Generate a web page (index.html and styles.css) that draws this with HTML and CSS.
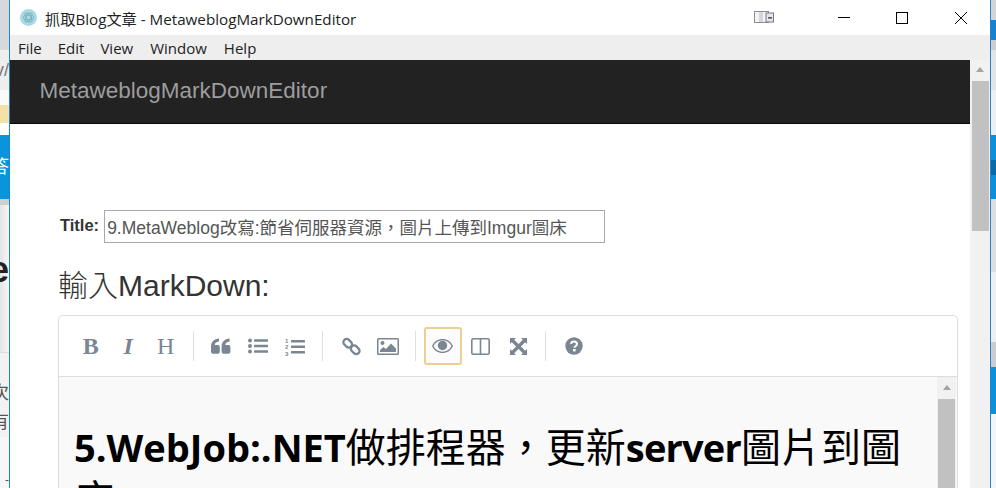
FILE: index.html
```html
<!DOCTYPE html>
<html lang="zh-Hant">
<head>
<meta charset="utf-8">
<title>抓取Blog文章 - MetaweblogMarkDownEditor</title>
<link rel="stylesheet" href="styles.css">
</head>
<body>
<div class="desktop">
  <div class="strip strip-left">
    <div class="seg l1"></div>
    <div class="seg l2">v/</div>
    <div class="seg l3"></div>
    <div class="seg l4"></div>
    <div class="seg l5"></div>
    <div class="seg l6">答</div>
    <div class="seg l7"></div>
    <div class="seg l8"><b>e</b></div>
    <div class="seg l9"><span>次</span><span>有</span></div>
    <div class="seg l10">-</div>
  </div>
  <div class="window">
    <header class="titlebar">
      <svg class="app-icon" viewBox="0 0 16 16" aria-hidden="true">
        <circle cx="8" cy="8" r="8" fill="#a5dbe6"/>
        <g fill="none" stroke="#7fa9b4" stroke-width=".8">
          <ellipse cx="8" cy="8" rx="5" ry="2.2"/>
          <ellipse cx="8" cy="8" rx="5" ry="2.2" transform="rotate(60 8 8)"/>
          <ellipse cx="8" cy="8" rx="5" ry="2.2" transform="rotate(120 8 8)"/>
        </g>
      </svg>
      <span class="win-title">抓取Blog文章 - MetaweblogMarkDownEditor</span>
      <svg class="tray-icon" viewBox="0 0 20 13" aria-hidden="true">
        <rect x=".5" y=".5" width="14" height="11" fill="#f4f4f6" stroke="#8d8d98"/>
        <rect x="5" y="1" width="4" height="10" fill="#d5d5dc"/>
        <rect x="12" y="2" width="7.5" height="9" fill="#e6e6ea" stroke="#777785"/>
        <rect x="14" y="6" width="4" height="1.6" fill="#555566"/>
      </svg>
      <div class="caption">
        <svg viewBox="0 0 12 12" class="cap-icon" aria-hidden="true"><path d="M0 5.5h12" stroke="#000" fill="none"/></svg>
      </div>
      <div class="caption">
        <svg viewBox="0 0 12 12" class="cap-icon" aria-hidden="true"><rect x=".5" y=".5" width="11" height="11" stroke="#000" fill="none"/></svg>
      </div>
      <div class="caption">
        <svg viewBox="0 0 12 12" class="cap-icon" aria-hidden="true"><path d="M0 0l12 12M12 0L0 12" stroke="#000" fill="none"/></svg>
      </div>
    </header>
    <nav class="menubar">
      <span class="m-file">File</span>
      <span class="m-edit">Edit</span>
      <span class="m-view">View</span>
      <span class="m-window">Window</span>
      <span>Help</span>
    </nav>
    <div class="viewport">
      <div class="page">
        <div class="navbar"><span class="brand">MetaweblogMarkDownEditor</span></div>
        <main class="content">
          <div class="title-row">
            <label class="title-label" for="title">Title:</label>
            <input class="title-input" id="title" type="text" value="9.MetaWeblog改寫:節省伺服器資源，圖片上傳到Imgur圖床">
          </div>
          <h3 class="section-heading"><span class="cjk">輸入</span>MarkDown:</h3>
          <section class="editor">
            <div class="toolbar">
              <span class="tool glyph bold">B</span>
              <span class="tool glyph italic">I</span>
              <span class="tool glyph">H</span>
              <i class="sep"></i>
              <span class="tool">
                <svg class="ic nudge1" width="20" height="16" viewBox="0 0 20 16" aria-hidden="true"><path d="M0 8.5C0 4 3 1 8 .5v3C5 4 3.8 5.3 3.7 7h3A2 2 0 0 1 8.8 9v4.7a2 2 0 0 1-2 2H2a2 2 0 0 1-2-2z"/><path d="M10.6 8.5c0-4.500 3-7.500 8-8v3c-3 .5-4.200 1.800-4.300 3.500h3a2 2 0 0 1 2.100 2v4.700a2 2 0 0 1-2 2h-4.800a2 2 0 0 1-2-2z"/></svg>
              </span>
              <span class="tool">
                <svg class="ic" width="20" height="16" viewBox="0 0 20 16" aria-hidden="true"><circle cx="2" cy="2.500" r="2"/><circle cx="2" cy="8" r="2"/><circle cx="2" cy="13.500" r="2"/><rect x="6" y="1.200" width="14" height="2.600" rx=".5"/><rect x="6" y="6.700" width="14" height="2.600" rx=".5"/><rect x="6" y="12.200" width="14" height="2.600" rx=".5"/></svg>
              </span>
              <span class="tool">
                <svg class="ic" width="20" height="19" viewBox="0 0 20 19" aria-hidden="true"><text class="ol-num" x="0" y="5.500">1</text><text class="ol-num" x="0" y="12">2</text><text class="ol-num" x="0" y="18.500">3</text><rect x="6" y="3" width="14" height="2.600" rx=".5"/><rect x="6" y="8.500" width="14" height="2.600" rx=".5"/><rect x="6" y="14" width="14" height="2.600" rx=".5"/></svg>
              </span>
              <i class="sep"></i>
              <span class="tool">
                <svg class="ic outline link nudge2" width="19" height="19" viewBox="0 0 19 19" aria-hidden="true"><rect x="1" y="3" width="9.500" height="6.500" rx="3.200" transform="rotate(45 5.700 6.200)"/><rect x="8.500" y="9.500" width="9.500" height="6.500" rx="3.200" transform="rotate(45 13.200 12.700)"/></svg>
              </span>
              <span class="tool">
                <svg class="ic nudge1" width="22" height="17" viewBox="0 0 22 17" aria-hidden="true"><path fill-rule="evenodd" d="M1.500 0h19A1.500 1.500 0 0 1 22 1.500v14a1.500 1.500 0 0 1-1.500 1.500h-19A1.500 1.500 0 0 1 0 15.500v-14A1.500 1.500 0 0 1 1.500 0zM1.500 1.500v14h19v-14z"/><circle cx="5.500" cy="5" r="2"/><path d="M3 14v-2l3.500-3 2.500 2L14 5.500l5 5V14z"/></svg>
              </span>
              <i class="sep sep-tight"></i>
              <span class="tool active">
                <svg class="ic" width="21" height="14" viewBox="0 0 21 14" aria-hidden="true"><path fill-rule="evenodd" d="M10.500 0C15 0 19 2.600 21 7c-2 4.400-6 7-10.500 7S2 11.400 0 7C2 2.600 6 0 10.500 0zM10.500 1.300C6.700 1.300 3.400 3.400 1.500 7c1.900 3.600 5.200 5.700 9 5.700s7.100-2.100 9-5.700c-1.900-3.600-5.200-5.700-9-5.700z"/><circle cx="10.500" cy="6.500" r="4.700"/></svg>
              </span>
              <span class="tool">
                <svg class="ic outline columns" width="19" height="17" viewBox="0 0 19 17" aria-hidden="true"><rect x=".8" y=".8" width="17.400" height="15.400" rx="1.500"/><path d="M9.500 1v15"/></svg>
              </span>
              <span class="tool">
                <svg class="ic nudge1" width="17" height="17" viewBox="0 0 17 17" aria-hidden="true"><path d="M0 0h6L4.200 1.800 8.500 6.100 12.800 1.800 11 0h6v6l-1.800-1.800-4.300 4.300 4.300 4.300L17 11v6h-6l1.800-1.800-4.300-4.300-4.300 4.300L6 17H0v-6l1.800 1.800 4.300-4.300-4.300-4.300L0 6z"/></svg>
              </span>
              <i class="sep"></i>
              <span class="tool">
                <svg class="ic nudge2" width="18" height="18" viewBox="0 0 18 18" aria-hidden="true"><circle cx="9" cy="9" r="8.700"/><path class="q-mark" d="M6 6.800C6.200 5.200 7.400 4.400 9 4.400c1.700 0 3 1 3 2.600 0 2.200-2.600 2.200-2.600 3.800"/><rect class="q-dot" x="8" y="12" width="2.600" height="2.400"/></svg>
              </span>
            </div>
            <div class="editor-body">
              <div class="preview">
                <h1 class="doc-heading">5.WebJob:.NET<span class="cjk">做排程器，更新</span><span class="tight">server</span><span class="cjk">圖片到圖床</span></h1>
              </div>
              <div class="scroll scroll-inner">
                <i class="arrow"></i>
                <i class="thumb"></i>
              </div>
            </div>
          </section>
        </main>
      </div>
      <div class="scroll scroll-outer">
        <i class="arrow"></i>
        <i class="thumb"></i>
      </div>
    </div>
  </div>
  <div class="strip strip-right">
    <div class="seg r1"></div>
    <div class="seg r2"></div>
    <div class="seg r3"></div>
    <div class="seg r4"></div>
    <div class="seg r5"></div>
    <div class="seg r6"></div>
    <div class="seg r7"></div>
    <div class="seg r8"></div>
    <div class="seg r9"></div>
    <div class="seg r10"></div>
    <div class="seg r11"></div>
    <div class="seg r12"></div>
    <div class="seg r13"></div>
  </div>
</div>
</body>
</html>
```
FILE: styles.css
```css
* { box-sizing: border-box; }
html, body { margin: 0; padding: 0; height: 488px; overflow: hidden; background: #fff; }
body { font-family: "Liberation Sans", "Noto Sans CJK TC", sans-serif; }
.desktop { display: flex; width: 996px; height: 488px; overflow: hidden; }

/* Neighbouring windows peeking out either side */
.strip { flex: none; display: flex; flex-direction: column; overflow: hidden; height: 488px; }
.strip-left { width: 9px; }
.strip-right { width: 5px; }
.seg { flex: none; overflow: hidden; display: flex; justify-content: flex-end; white-space: nowrap; }
.l1 { height: 50px; background: #d6d9dc; }
.l2 { height: 40px; background: #eeeeee; color: #777; font-size: 18px; line-height: 40px; }
.l3 { height: 15px; background: #fafafa; }
.l4 { height: 18px; background: #f4e1a8; }
.l5 { height: 12px; background: #ffffff; }
.l6 { height: 64px; background: #0a94da; color: #fff; font-size: 18px; line-height: 64px; }
.l7 { height: 6px; background: #cfcfcf; }
.l8 { height: 147px; background: linear-gradient(90deg, #e4e4e4, #f7f7f7); color: #222; font-size: 36px; line-height: 130px; align-items: flex-start; }
.l9 { height: 85px; background: #f2f2f2; border-top: 1px solid #dddddd; color: #555; font-size: 18px; flex-direction: column; align-items: flex-end; line-height: 29px; padding-top: 22px; }
.l10 { flex: 1; background: #f7f7f7; color: #555; font-size: 12px; padding-top: 36px; }
.r1 { height: 20px; background: #d4d4d4; }
.r2 { height: 20px; background: #1781d0; }
.r3 { height: 10px; background: #cdcdcd; }
.r4 { height: 40px; background: #e4e4e4; }
.r5 { height: 45px; background: #efefef; }
.r6 { height: 25px; background: #0b91d8; }
.r7 { height: 15px; background: #0b6ba6; }
.r8 { height: 24px; background: #0b91d8; }
.r9 { height: 73px; background: #dedede; }
.r10 { height: 70px; background: #efefef; }
.r11 { height: 25px; background: #cccccc; }
.r12 { height: 47px; background: #0b91d8; }
.r13 { flex: 1; background: #f5f5f5; }

/* App window */
.window { flex: none; width: 982px; border-left: 1px solid #1e84d8; border-right: 1px solid #1e84d8; display: flex; flex-direction: column; height: 488px; background: #fff; }
.titlebar { flex: none; height: 35px; display: flex; align-items: center; padding-left: 10px; background: #fff; }
.app-icon { width: 17px; height: 17px; flex: none; margin-right: 8px; }
.win-title { flex: 1; font-family: "Open Sans", "Noto Sans CJK TC", sans-serif; font-size: 15.200px; color: #222; white-space: nowrap; }
.tray-icon { width: 20px; height: 13px; flex: none; margin-right: 41px; }
.caption { flex: none; width: 58.500px; height: 35px; display: flex; align-items: center; justify-content: center; }
.cap-icon { width: 12px; height: 12px; }

.menubar { flex: none; height: 25px; background: #eeeeee; display: flex; align-items: center; padding-left: 8px; font-family: "Open Sans", sans-serif; font-size: 15px; color: #222; }
.m-file { margin-right: 16px; }
.m-edit { margin-right: 16px; }
.m-view { margin-right: 17px; }
.m-window { margin-right: 17px; }

.viewport { flex: 1; min-height: 0; display: flex; overflow: hidden; }
.page { flex: none; width: 960px; display: flex; flex-direction: column; overflow: hidden; }
.navbar { flex: none; height: 64px; background: #222222; border-bottom: 1px solid #080808; padding: 0 0 2px 29.500px; display: flex; align-items: center; }
.brand { font-size: 22.500px; color: #9d9d9d; }
.content { padding: 86px 11px 0 48px; }
.title-row { display: flex; align-items: center; height: 33px; }
.title-label { font-size: 16.500px; font-weight: 700; color: #333; margin: 0 5px 0 2px; position: relative; top: -1px; }
.title-input { width: 501px; height: 33px; border: 1px solid #a9a9a9; padding: 0 2px; font: 17.500px "Liberation Sans", "Noto Sans CJK TC", sans-serif; color: #555; background: #fff; outline: none; border-radius: 0; }
.section-heading { margin: 26px 0 13px; font-size: 30px; line-height: 33px; font-weight: 400; color: #333; }
.cjk { font-weight: 300; }

.editor { width: 900px; border: 1px solid #dddddd; border-radius: 5px 5px 0 0; border-bottom: 0; background: #fff; }
.toolbar { height: 61px; display: flex; align-items: center; padding-left: 13px; border-bottom: 1px solid #dddddd; }
.tool { flex: none; width: 37.500px; height: 38px; display: flex; align-items: center; justify-content: center; border: 1px solid transparent; border-radius: 3px; color: #7a8792; }
.tool.active { border: 2px solid #edcf8f; background: #fcfcfc; }
.glyph { font-family: "Liberation Serif", serif; font-size: 24px; }
.glyph.bold { font-weight: 700; }
.glyph.italic { font-style: italic; font-weight: 700; }
.sep { flex: none; width: 1px; height: 30px; background: #e0e0e0; margin: 0 8px 0 8px; }
.sep-tight { margin: 0 8px 0 9px; }
.ic { fill: #7a8792; display: block; }
.ic.outline { fill: none; stroke: #7a8792; }
.ic.link { stroke-width: 2.300; }
.ic.columns { stroke-width: 1.600; }
.nudge1 { margin-left: 2px; }
.nudge2 { margin-left: 4px; }
.q-mark { fill: none; stroke: #fff; stroke-width: 2; }
.q-dot { fill: #fff; }
.ol-num { font: 700 6px "Liberation Sans", sans-serif; }

.editor-body { display: flex; height: 111px; background: #f9f9f9; overflow: hidden; }
.preview { flex: 1; min-width: 0; padding: 0 25px 0 15px; overflow: hidden; }
.doc-heading { margin: 44px 0 0; font-family: "Open Sans", "Noto Sans CJK TC", sans-serif; font-size: 38px; line-height: 52px; font-weight: 700; color: #000; }
.doc-heading .cjk { font-weight: 400; font-size: 40px; }
.doc-heading .tight { letter-spacing: -.800px; }

.scroll { flex: none; display: flex; flex-direction: column; align-items: center; background: #f1f1f1; }
.scroll-outer { width: 20px; padding-top: 7px; }
.scroll-inner { width: 19px; padding-top: 8px; margin-right: 1px; }
.arrow { flex: none; width: 0; height: 0; border-left: 4.500px solid transparent; border-right: 4.500px solid transparent; border-bottom: 5px solid #a3a3a3; }
.thumb { flex: none; width: 17px; background: #c1c1c1; }
.scroll-outer .thumb { height: 150px; margin-top: 9px; }
.scroll-inner .thumb { height: 200px; margin-top: 9px; }
```
